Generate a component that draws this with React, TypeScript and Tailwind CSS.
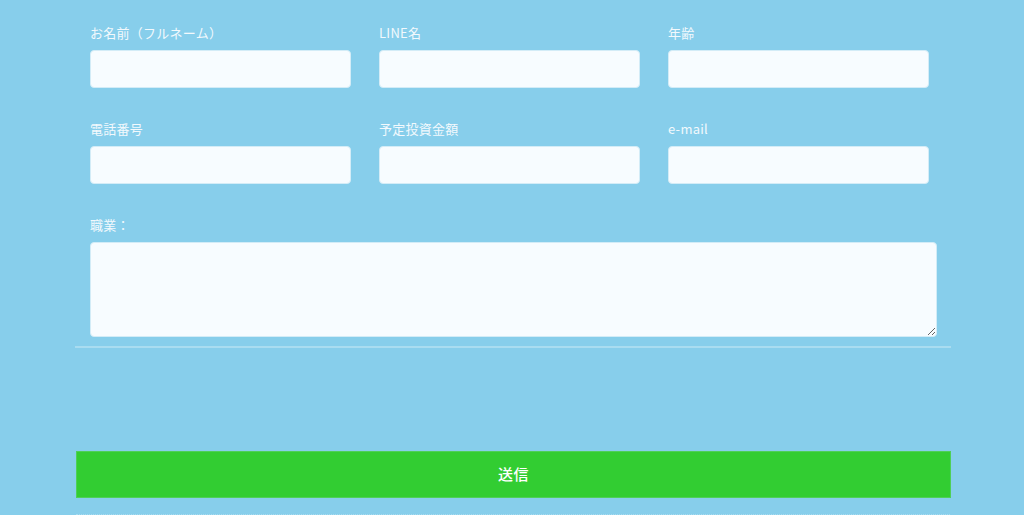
import React from 'react';

const fields = [
  { label: 'お名前（フルネーム）', type: 'text' },
  { label: 'LINE名', type: 'text' },
  { label: '年齢', type: 'text' },
  { label: '電話番号', type: 'tel' },
  { label: '予定投資金額', type: 'text' },
  { label: 'e-mail', type: 'email' },
];

export default function App() {
  return (
    <div
      className="w-full h-[516px] bg-[#87ceeb] flex flex-col overflow-hidden"
      style={{ fontFamily: '"Noto Sans CJK JP", "Noto Sans", sans-serif' }}
    >
      <div className="ml-[75px] w-[876px] flex-1 flex flex-col">
        <form className="px-[15px] pt-[23px]" onSubmit={(e) => e.preventDefault()}>
          <div className="grid grid-cols-[261px_261px_261px] gap-x-[28px] gap-y-[31px]">
            {fields.map((f) => (
              <label key={f.label} className="flex flex-col">
                <span className="text-[13px] leading-[20px] font-normal tracking-[0.02em] text-[#f2f9fd] mb-[7px]">
                  {f.label}
                </span>
                <input
                  type={f.type}
                  className="h-[38px] w-full rounded-[4px] bg-[#f7fcff] border border-[#d3ecf7] outline-none"
                />
              </label>
            ))}
          </div>
          <label className="flex flex-col mt-[31px]">
            <span className="text-[13px] leading-[20px] font-normal tracking-[0.02em] text-[#f2f9fd] mb-[7px]">
              職業：
            </span>
            <textarea className="h-[95px] w-[847px] rounded-[4px] bg-[#f7fcff] border border-[#d3ecf7] outline-none" />
          </label>
        </form>
        <div className="mt-[9px] h-[2px] w-full bg-[#a9dcf0]" />
        <button
          type="button"
          className="mt-[103px] ml-px h-[47px] w-[875px] bg-[#32cd32] border border-[#4fcf57] text-white text-[15px] font-medium tracking-wide"
        >
          送信
        </button>
        <div className="mt-auto mx-px border-b border-dotted border-[#a9dcf0]" />
      </div>
      <div className="h-px bg-white" />
    </div>
  );
}
